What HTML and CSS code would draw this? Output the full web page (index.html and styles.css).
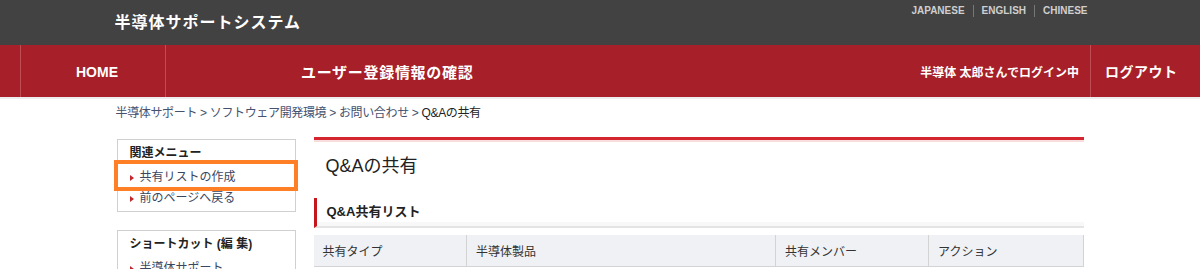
FILE: index.html
```html
<!DOCTYPE html>
<html lang="ja">
<head>
<meta charset="utf-8">
<title>Q&amp;Aの共有</title>
<link rel="stylesheet" href="styles.css">
</head>
<body>
<header class="topbar">
  <div class="topbar-inner">
    <div class="site-title">半導体サポートシステム</div>
    <ul class="lang">
      <li>JAPANESE</li>
      <li>ENGLISH</li>
      <li>CHINESE</li>
    </ul>
  </div>
</header>
<nav class="gnav">
  <a class="gnav-home">HOME</a>
  <a class="gnav-page">ユーザー登録情報の確認</a>
  <span class="gnav-user">半導体 太郎さんでログイン中</span>
  <a class="gnav-logout">ログアウト</a>
</nav>
<div class="gnav-shade"></div>
<div class="container">
  <div class="breadcrumb">
    <a>半導体サポート</a><span class="sep">&gt;</span><a>ソフトウェア開発環境</a><span class="sep">&gt;</span><a>お問い合わせ</a><span class="sep">&gt;</span><span class="current">Q&amp;Aの共有</span>
  </div>
  <div class="columns">
    <aside class="sidebar">
      <div class="side-box">
        <div class="side-title">関連メニュー</div>
        <ul class="side-list">
          <li><span class="tri"></span>共有リストの作成</li>
          <li><span class="tri"></span>前のページへ戻る</li>
        </ul>
        <div class="highlight"></div>
      </div>
      <div class="side-box">
        <div class="side-title">ショートカット (編 集)</div>
        <ul class="side-list">
          <li><span class="tri"></span>半導体サポート</li>
        </ul>
      </div>
    </aside>
    <main class="main">
      <h1 class="page-title">Q&amp;Aの共有</h1>
      <h2 class="section-title">Q&amp;A共有リスト</h2>
      <table class="list">
        <colgroup>
          <col class="c1"><col class="c2"><col class="c3"><col class="c4">
        </colgroup>
        <thead>
          <tr><th>共有タイプ</th><th>半導体製品</th><th>共有メンバー</th><th>アクション</th></tr>
        </thead>
      </table>
    </main>
  </div>
</div>
</body>
</html>
```
FILE: styles.css
```css
* { box-sizing: border-box; }
html, body { margin: 0; padding: 0; }
body {
  font-family: "Liberation Sans", "Noto Sans CJK JP", sans-serif;
  font-size: 12px;
  color: #333;
  background: #fff;
  overflow: hidden;
}
a { color: inherit; text-decoration: none; }
ul { margin: 0; padding: 0; list-style: none; }
h1, h2 { margin: 0; }

.topbar { background: #424242; height: 45px; }
.topbar-inner {
  width: 967px;
  margin: 0 auto;
  height: 45px;
  display: flex;
  justify-content: space-between;
}
.site-title {
  color: #fff;
  font-weight: bold;
  font-size: 16px;
  letter-spacing: 1px;
  line-height: 45px;
  margin-left: -2px;
}
.lang {
  display: flex;
  align-items: flex-start;
  padding-top: 5px;
  margin-right: -4px;
}
.lang li {
  font-size: 10px;
  font-weight: bold;
  color: #cfcfcf;
  line-height: 12px;
  padding: 0 8px;
  border-left: 1px solid #777;
}
.lang li:first-child { border-left: none; }
.lang li:last-child { padding-right: 0; }

.gnav {
  background: #a71f28;
  height: 52px;
  display: flex;
  align-items: stretch;
  padding-left: 20px;
  color: #fff;
  font-weight: bold;
}
.gnav a, .gnav span { display: flex; align-items: center; }
.gnav-home {
  width: 146px;
  border-left: 1px solid #c04d53;
  border-right: 1px solid #c04d53;
  padding-left: 55px;
  padding-top: 1px;
  font-size: 14px;
}
.gnav-page {
  padding-left: 135px;
  font-size: 15px;
  letter-spacing: 0.7px;
  flex: 1;
}
.gnav-user {
  font-size: 12px;
  padding-right: 11px;
}
.gnav-logout {
  border-left: 1px solid #c04d53;
  padding-left: 14px;
  width: 110px;
  font-size: 14px;
  letter-spacing: 0.5px;
}
.gnav-shade { height: 2px; background: #ededed; }

.container { width: 967px; margin: 0 auto; }
.breadcrumb {
  margin-top: 6px;
  line-height: 16px;
  font-size: 12px;
  letter-spacing: -0.35px;
  color: #44526f;
  margin-left: -1px;
}
.breadcrumb .sep { margin: 0 3px; }
.breadcrumb .current { color: #222; }

.columns {
  display: flex;
  gap: 18px;
  margin-top: 16px;
  align-items: flex-start;
}
.sidebar { width: 179px; flex: none; margin-top: 2px; }
.side-box {
  position: relative;
  border: 1px solid #d0d0d0;
  padding: 5px 12px 2px;
  margin-bottom: 18px;
}
.side-title {
  font-weight: bold;
  font-size: 12px;
  line-height: 16px;
  color: #222;
  margin-bottom: 6px;
}
.side-list li {
  line-height: 21px;
  font-size: 12px;
  color: #3a4660;
  display: flex;
  align-items: center;
}
.tri {
  width: 0; height: 0;
  border-left: 4px solid #c1272d;
  border-top: 3px solid transparent;
  border-bottom: 3px solid transparent;
  margin-right: 6px;
}
.highlight {
  position: absolute;
  left: -4px;
  top: 20px;
  width: 184px;
  height: 31px;
  border: 4px solid #ff7f27;
}

.main { width: 770px; flex: none; }
.page-title {
  border-top: 3px solid #d5262f;
  box-shadow: inset 0 2px 0 #f8dddd;
  padding: 14px 0 0 12px;
  font-size: 18px;
  line-height: 24px;
  font-weight: normal;
  color: #222;
}
.section-title {
  margin-top: 20px;
  border-left: 3px solid #c4161c;
  border-bottom: 2px solid #e4e4e4;
  box-shadow: inset 0 -4px 0 #f8f8f8;
  padding: 6px 0 6px 10px;
  font-size: 13px;
  line-height: 16px;
  font-weight: bold;
  color: #222;
}
.list {
  margin-top: 7px;
  width: 770px;
  border-collapse: collapse;
  table-layout: fixed;
}
.list .c1 { width: 153px; }
.list .c2 { width: 309px; }
.list .c3 { width: 153px; }
.list .c4 { width: 155px; }
.list th {
  background: #eff1f5;
  font-weight: normal;
  text-align: left;
  font-size: 12px;
  color: #333;
  height: 31px;
  padding: 0 9px;
  border-right: 1px solid #d3d3d3;
  border-bottom: 1px solid #d3d3d3;
}
```
